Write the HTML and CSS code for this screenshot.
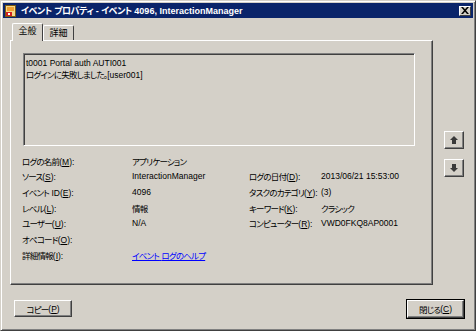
FILE: index.html
```html
<!DOCTYPE html>
<html lang="ja">
<head>
    <meta charset="UTF-8">
    <title>イベント プロパティ</title>
    <link rel="stylesheet" href="styles.css">
</head>
<body>
    <div class="window">
        <div class="titlebar">
            <svg class="app-icon" width="11" height="12" viewBox="0 0 11 12">
                <rect x="0.5" y="0.5" width="10" height="11" fill="#f4d88a" stroke="#7a5a10"/>
                <rect x="2" y="2" width="7" height="4" fill="#f0a030"/>
                <rect x="1" y="7" width="6" height="4" fill="#d02020"/>
                <rect x="3" y="8" width="2" height="2" fill="#ffffff"/>
            </svg>
            <span class="title"><span class="ja">イベント</span> <span class="ja">プロパティ</span> - <span class="ja">イベント</span> 4096, InteractionManager</span>
            <span class="close-box">
                <svg width="8" height="7" viewBox="0 0 8 7">
                    <path d="M0 0h2l2 2.3L6 0h2L5 3.5 8 7H6L4 4.7 2 7H0l3-3.5z" fill="#000"/>
                </svg>
            </span>
        </div>

        <div class="client">
            <div class="main">
                <div class="tab-area">
                    <div class="tabs">
                        <div class="tab active">全般</div>
                        <div class="tab">詳細</div>
                    </div>
                    <div class="panel">
                        <div class="desc">
                            t0001 Portal auth AUTI001<br>
                            <span class="ja">ログインに失敗しました。</span>[user001]
                        </div>
                        <div class="fields">
                            <span><span class="ja">ログの名前</span>(<u>M</u>):</span>
                            <span class="ja">アプリケーション</span>
                            <span></span>
                            <span></span>

                            <span><span class="ja">ソース</span>(<u>S</u>):</span>
                            <span>InteractionManager</span>
                            <span><span class="ja">ログの日付</span>(<u>D</u>):</span>
                            <span>2013/06/21 15:53:00</span>

                            <span><span class="ja">イベント</span> ID(<u>E</u>):</span>
                            <span>4096</span>
                            <span><span class="ja">タスクのカテゴリ</span>(<u>Y</u>):</span>
                            <span>(3)</span>

                            <span><span class="ja">レベル</span>(<u>L</u>):</span>
                            <span class="ja">情報</span>
                            <span><span class="ja">キーワード</span>(<u>K</u>):</span>
                            <span class="ja">クラシック</span>

                            <span><span class="ja">ユーザー</span>(<u>U</u>):</span>
                            <span>N/A</span>
                            <span><span class="ja">コンピューター</span>(<u>R</u>):</span>
                            <span>VWD0FKQ8AP0001</span>

                            <span><span class="ja">オペコード</span>(<u>O</u>):</span>
                            <span></span>
                            <span></span>
                            <span></span>

                            <span><span class="ja">詳細情報</span>(<u>I</u>):</span>
                            <span><a class="help-link" href="#"><span class="ja">イベント</span> <span class="ja">ログのヘルプ</span></a></span>
                            <span></span>
                            <span></span>
                        </div>
                    </div>
                </div>
                <div class="nav">
                    <button class="btn nav-btn" title="前へ">
                        <svg width="8" height="8" viewBox="0 0 8 8"><path d="M4 0L8 4H6V8H2V4H0z" fill="#3a3a3a"/></svg>
                    </button>
                    <button class="btn nav-btn" title="次へ">
                        <svg width="8" height="8" viewBox="0 0 8 8"><path d="M4 8L8 4H6V0H2V4H0z" fill="#3a3a3a"/></svg>
                    </button>
                </div>
            </div>

            <div class="footer">
                <button class="btn push"><span class="ja">コピー</span>(<u>P</u>)</button>
                <button class="btn push default"><span class="ja">閉じる</span>(<u>C</u>)</button>
            </div>
        </div>
    </div>
</body>
</html>
```

FILE: styles.css
```css
body {
    margin: 0;
    background: #d4d0c8;
    font-family: "Liberation Sans", "Noto Sans CJK JP", sans-serif;
    font-size: 8.5px;
    font-feature-settings: "palt";
    color: #000;
}
.ja {
    letter-spacing: -0.8px;
}
.window {
    width: 476px;
    height: 331px;
    box-sizing: border-box;
    border: 1px solid;
    border-color: #d4d0c8 #404040 #404040 #d4d0c8;
    box-shadow: inset 1px 1px #fff, inset -1px -1px #808080;
    padding: 2px;
    background: #d4d0c8;
}
.titlebar {
    height: 15px;
    background: #0a246a;
    display: flex;
    align-items: center;
    padding-left: 2px;
    color: #fff;
}
.app-icon {
    flex: none;
    margin-right: 5px;
}
.title {
    flex: 1;
    font-weight: bold;
    font-size: 9px;
    white-space: nowrap;
}
.title .ja {
    letter-spacing: -0.5px;
}
.close-box {
    width: 12px;
    height: 10px;
    box-sizing: border-box;
    margin-right: 2px;
    background: #d4d0c8;
    border: 1px solid;
    border-color: #fff #404040 #404040 #fff;
    display: flex;
    align-items: center;
    justify-content: center;
}
.client {
    padding: 0 9px 0 7px;
}
.main {
    display: flex;
    gap: 11px;
    margin-top: 5px;
}
.tab-area {
    width: 423px;
}
.tabs {
    display: flex;
    align-items: flex-end;
    height: 17px;
    padding-left: 2px;
}
.tab {
    width: 31px;
    height: 15px;
    box-sizing: border-box;
    border: 1px solid;
    border-bottom: none;
    border-color: #fff #404040 #404040 #fff;
    border-radius: 2px 2px 0 0;
    text-align: center;
    line-height: 14px;
    font-size: 9px;
    background: #d4d0c8;
}
.tab.active {
    height: 18px;
    margin-bottom: -1px;
    position: relative;
    z-index: 1;
    line-height: 15px;
    padding-bottom: 2px;
}
.panel {
    height: 245px;
    box-sizing: border-box;
    border: 1px solid;
    border-color: #fff #404040 #404040 #fff;
    box-shadow: inset -1px -1px #808080;
    padding: 12px 0 0 11px;
}
.desc {
    width: 392px;
    height: 93px;
    box-sizing: border-box;
    margin-left: 1px;
    border: 1px solid;
    border-color: #808080 #fff #fff #808080;
    box-shadow: inset 1px 1px #404040;
    padding: 3px 2px;
    line-height: 12px;
}
.fields {
    display: grid;
    grid-template-columns: 110px 117px 72px 1fr;
    grid-auto-rows: 15.65px;
    align-items: center;
    margin-top: 7px;
    white-space: nowrap;
}
.help-link {
    color: #0000ff;
}
.nav {
    display: flex;
    flex-direction: column;
    gap: 10px;
    padding-top: 108px;
}
.btn {
    font: inherit;
    color: #000;
    background: #d4d0c8;
    border: 1px solid;
    border-color: #fff #404040 #404040 #fff;
    box-shadow: inset -1px -1px #808080;
    padding: 0;
    display: flex;
    align-items: center;
    justify-content: center;
}
.nav-btn {
    width: 20px;
    height: 18px;
}
.footer {
    display: flex;
    justify-content: space-between;
    margin-top: 15px;
    padding-left: 4px;
}
.push {
    width: 58px;
    height: 17px;
}
.push.default {
    width: 57px;
    height: 18px;
    outline: 1px solid #000;
    outline-offset: 0;
}
```
